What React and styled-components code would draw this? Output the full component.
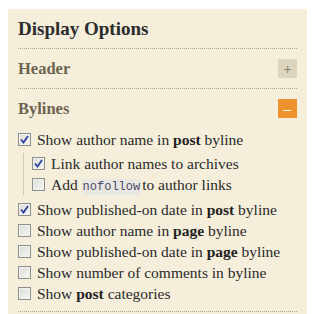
import React, { useState } from "react";
import styled, { createGlobalStyle } from "styled-components";

const GlobalStyle = createGlobalStyle`
  body {
    margin: 9px 0 0 8px;
    background: #ffffff;
    font-family: "Liberation Serif", "DejaVu Serif", serif;
  }
`;

const Panel = styled.div`
  width: 279px;
  padding: 0 10px;
  background-color: #f4eedb;
  min-height: 310px;
`;

const Title = styled.h2`
  margin: 0;
  height: 39px;
  display: flex;
  align-items: center;
  font-size: 19px;
  font-weight: bold;
  color: #2c2c2c;
  border-bottom: 1px dotted #b2a88c;
`;

const SectionHead = styled.div`
  height: 39px;
  display: flex;
  align-items: center;
  justify-content: space-between;
  border-bottom: ${(props) => (props.open ? "none" : "1px dotted #b2a88c")};
`;

const SectionName = styled.span`
  font-size: 16.5px;
  font-weight: bold;
  color: #6d6450;
`;

const Toggle = styled.button`
  width: 19px;
  height: 19px;
  padding: 0;
  border: none;
  display: flex;
  align-items: center;
  justify-content: center;
  background-color: ${(props) => (props.open ? "#ef912c" : "#dbd5bd")};
  color: ${(props) => (props.open ? "#ffffff" : "#888070")};
  font-family: "Liberation Sans", sans-serif;
  font-size: 14px;
  cursor: pointer;
`;

const List = styled.div`
  display: flex;
  flex-direction: column;
  padding: 1px 0 7px;
  border-bottom: 1px dotted #b2a88c;
`;

const Nested = styled.div`
  display: flex;
  flex-direction: column;
  margin: 3px 0 4px 5px;
  padding-left: 8px;
  border-left: 1px solid #d3cbb2;
`;

const Row = styled.label`
  height: 21px;
  display: flex;
  align-items: center;
  gap: 6px;
  font-size: 15.5px;
  color: #2a2a2a;
  cursor: pointer;
  white-space: nowrap;

  b {
    color: #222;
  }
`;

const Box = styled.span`
  width: 11px;
  height: 11px;
  flex: none;
  border: 1px solid #8e8f8f;
  background: linear-gradient(135deg, #dcdcd8 0%, #f6f6f4 100%);
  box-shadow: inset 0 0 0 1px #f1f1ee;
  display: flex;
  align-items: center;
  justify-content: center;
`;

const Code = styled.code`
  font-family: "Liberation Mono", monospace;
  font-size: 12px;
  color: #4b4a66;
  background-color: #e9e7e1;
  padding: 1px 1px;
  margin-right: 1px;
`;

const Check = ({ on, onClick }) => (
  <Box onClick={onClick}>
    {on && (
      <svg width="9" height="9" viewBox="0 0 9 9">
        <path d="M1 4.5 L3.5 7.5 L8 1" fill="none" stroke="#2f3fa0" strokeWidth="1.8" />
      </svg>
    )}
  </Box>
);

const Option = ({ on, children }) => {
  const [checked, setChecked] = useState(on);
  return (
    <Row>
      <Check on={checked} onClick={() => setChecked(!checked)} />
      <span>{children}</span>
    </Row>
  );
};

const App = () => {
  const [headerOpen, setHeaderOpen] = useState(false);

  return (
    <Panel>
      <GlobalStyle />
      <Title>Display Options</Title>
      <SectionHead>
        <SectionName>Header</SectionName>
        <Toggle onClick={() => setHeaderOpen(!headerOpen)}>+</Toggle>
      </SectionHead>
      <SectionHead open>
        <SectionName>Bylines</SectionName>
        <Toggle open>–</Toggle>
      </SectionHead>
      <List>
        <Option on>
          Show author name in <b>post</b> byline
        </Option>
        <Nested>
          <Option on>Link author names to archives</Option>
          <Option>
            Add <Code>nofollow</Code>to author links
          </Option>
        </Nested>
        <Option on>
          Show published-on date in <b>post</b> byline
        </Option>
        <Option>
          Show author name in <b>page</b> byline
        </Option>
        <Option>
          Show published-on date in <b>page</b> byline
        </Option>
        <Option>Show number of comments in byline</Option>
        <Option>
          Show <b>post</b> categories
        </Option>
      </List>
    </Panel>
  );
};

export default App;
